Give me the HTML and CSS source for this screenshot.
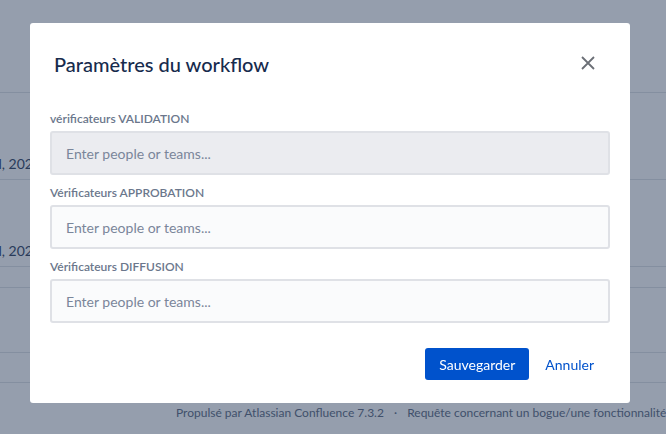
FILE: index.html
```html
<!DOCTYPE html>
<html lang="fr">

<head>
    <meta charset="UTF-8">
    <meta name="viewport" content="width=device-width, initial-scale=1.0">
    <title>Paramètres du workflow</title>
    <link rel="stylesheet" href="styles.css">
</head>

<body>
    <div class="page">
        <div class="page-header"></div>
        <div class="list">
            <div class="list-row"><span class="date">avril, 2020</span></div>
            <div class="list-row"><span class="date">avril, 2020</span></div>
            <div class="list-row small"></div>
            <div class="list-row medium"></div>
            <div class="list-row thin"></div>
        </div>
        <div class="page-footer">
            Propulsé par Atlassian Confluence 7.3.2
            <span class="sep">·</span>
            Requête concernant un bogue/une fonctionnalité
        </div>
    </div>

    <div class="blanket">
        <div class="modal">
            <div class="modal-header">
                <h2 class="modal-title">Paramètres du workflow</h2>
                <button class="close-btn" aria-label="Fermer">
                    <svg width="16" height="16" viewBox="0 0 16 16">
                        <path d="M2 2 L14 14 M14 2 L2 14" stroke="#6b6f76" stroke-width="1.8" fill="none" />
                    </svg>
                </button>
            </div>

            <div class="modal-body">
                <div class="field">
                    <label class="field-label">vérificateurs VALIDATION</label>
                    <input class="picker disabled" type="text" placeholder="Enter people or teams...">
                </div>
                <div class="field">
                    <label class="field-label">Vérificateurs APPROBATION</label>
                    <input class="picker" type="text" placeholder="Enter people or teams...">
                </div>
                <div class="field">
                    <label class="field-label">Vérificateurs DIFFUSION</label>
                    <input class="picker" type="text" placeholder="Enter people or teams...">
                </div>
            </div>

            <div class="modal-footer">
                <button class="btn btn-primary">Sauvegarder</button>
                <button class="btn btn-link">Annuler</button>
            </div>
        </div>
    </div>
</body>

</html>
```

FILE: styles.css
```css
body {
    margin: 0;
    font-family: 'Lato', 'Noto Sans', sans-serif;
    background-color: #fff;
    color: #172b4d;
    height: 434px;
    overflow: hidden;
}

/* page behind the dialog */
.page {
    height: 434px;
}

.page-header {
    height: 93px;
    border-bottom: 1px solid #e2e4e9;
    box-sizing: border-box;
}

.list-row {
    height: 87px;
    border-bottom: 1px solid #e2e4e9;
    box-sizing: border-box;
    display: flex;
    align-items: flex-end;
    padding-bottom: 7px;
    font-size: 14px;
    color: #42526e;
}

.list-row.small {
    height: 21px;
}

.list-row.medium {
    height: 65px;
}

.list-row.thin {
    height: 30px;
}

.date {
    margin-left: -24px;
    white-space: nowrap;
}

.page-footer {
    padding: 22px 0 0 176px;
    font-size: 12px;
    color: #6b778c;
    white-space: nowrap;
}

.sep {
    margin: 0 7px;
}

/* blanket + dialog */
.blanket {
    position: fixed;
    inset: 0;
    background-color: rgba(9, 30, 66, 0.43);
}

.modal {
    margin: 23px 0 0 30px;
    width: 600px;
    height: 380px;
    box-sizing: border-box;
    background-color: #fff;
    border-radius: 3px;
    display: flex;
    flex-direction: column;
}

.modal-header {
    display: flex;
    justify-content: space-between;
    align-items: flex-start;
    padding: 29px 26px 0 24px;
}

.modal-title {
    margin: 0;
    font-size: 20px;
    font-weight: 500;
    line-height: 24px;
    color: #172b4d;
}

.close-btn {
    width: 32px;
    height: 32px;
    margin-top: -5px;
    border: none;
    background: none;
    padding: 0;
    display: flex;
    align-items: center;
    justify-content: center;
}

.modal-body {
    padding: 32px 20px 0 20px;
}

.field {
    margin-bottom: 10px;
}

.field-label {
    display: block;
    font-size: 12px;
    font-weight: 600;
    line-height: 16px;
    color: #6b778c;
    margin-bottom: 4px;
}

.picker {
    display: block;
    width: 100%;
    height: 44px;
    box-sizing: border-box;
    border: 2px solid #dfe1e6;
    border-radius: 3px;
    background-color: #fafbfc;
    padding: 0 14px;
    font-family: inherit;
    font-size: 14px;
    color: #172b4d;
}

.picker::placeholder {
    color: #7a869a;
}

.picker.disabled {
    background-color: #ebecf0;
}

.modal-footer {
    display: flex;
    justify-content: flex-end;
    gap: 4px;
    padding: 15px 24px 24px 0;
}

.btn {
    height: 32px;
    border: none;
    border-radius: 3px;
    font-family: inherit;
    font-size: 14px;
    padding: 0 12px;
}

.btn-primary {
    background-color: #0052cc;
    color: #fff;
    padding: 0 14px;
}

.btn-link {
    background: none;
    color: #0052cc;
}
```
